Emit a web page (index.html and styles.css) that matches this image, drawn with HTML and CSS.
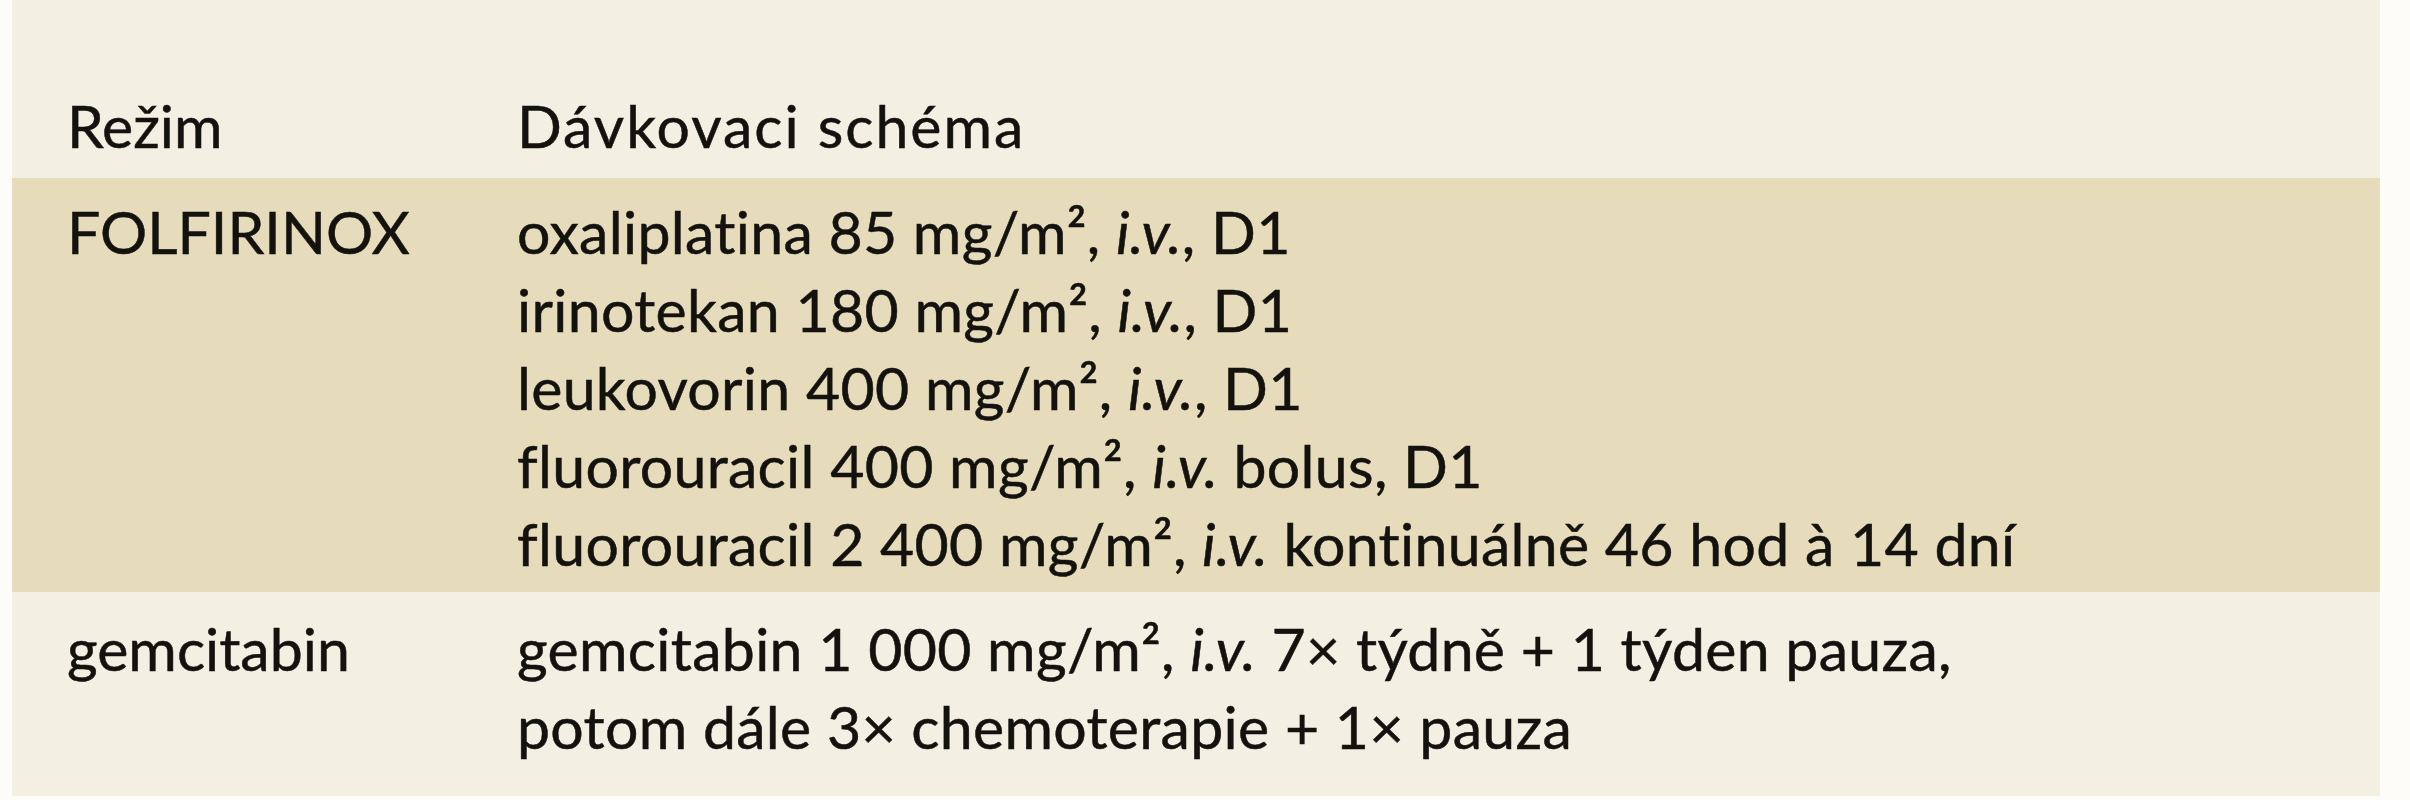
FILE: index.html
```html
<!DOCTYPE html>
<html lang="cs">
<head>
<meta charset="utf-8">
<title>Režim – dávkovací schéma</title>
<link rel="stylesheet" href="styles.css">
</head>
<body>
<table class="regimens">
  <colgroup>
    <col class="col-name">
    <col class="col-dose">
  </colgroup>
  <thead>
    <tr class="row-head">
      <th class="cell-name">Režim</th>
      <th class="cell-dose">Dávkovaci schéma</th>
    </tr>
  </thead>
  <tbody>
    <tr class="row-dark">
      <td class="cell-name">FOLFIRINOX</td>
      <td class="cell-dose">
        <div class="line">oxaliplatina 85 mg/m², <i>i.v.</i>, D1</div>
        <div class="line">irinotekan 180 mg/m², <i>i.v.</i>, D1</div>
        <div class="line">leukovorin 400 mg/m², <i>i.v.</i>, D1</div>
        <div class="line">fluorouracil 400 mg/m², <i>i.v.</i> bolus, D1</div>
        <div class="line">fluorouracil 2 400 mg/m², <i>i.v.</i> kontinuálně 46 hod à 14 dní</div>
      </td>
    </tr>
    <tr class="row-light">
      <td class="cell-name">gemcitabin</td>
      <td class="cell-dose">
        <div class="line">gemcitabin 1 000 mg/m², <i>i.v.</i> 7× týdně + 1 týden pauza,</div>
        <div class="line">potom dále 3× chemoterapie + 1× pauza</div>
      </td>
    </tr>
  </tbody>
</table>
</body>
</html>
```

FILE: styles.css
```css
html, body {
  margin: 0;
  padding: 0;
  background: #fdfcf8;
}

.regimens {
  margin-left: 12px;
  width: 2368px;
  border-collapse: collapse;
  table-layout: fixed;
  font-family: Lato, "Noto Sans", sans-serif;
  font-size: 59px;
  line-height: 78px;
  color: #14120f;
  -webkit-text-stroke: 0.5px #14120f;
}

.col-name { width: 505px; }

.regimens th,
.regimens td {
  text-align: left;
  vertical-align: top;
  font-weight: normal;
  padding: 0;
}

.cell-name { padding-left: 55px !important; }

.regimens td.cell-dose { letter-spacing: 0.3px; }

.row-head { background: #f3efe2; }
.row-head th {
  padding-top: 87px;
  padding-bottom: 13px;
}

.row-head .cell-dose { letter-spacing: 2px; }

.row-dark { background: #e6dcbb; }
.row-dark td {
  padding-top: 15px;
  padding-bottom: 9px;
}

.row-light { background: #f3efe2; }
.row-light td {
  padding-top: 18px;
  padding-bottom: 30px;
}

.line { white-space: nowrap; }

.regimens i { font-style: italic; }
```
